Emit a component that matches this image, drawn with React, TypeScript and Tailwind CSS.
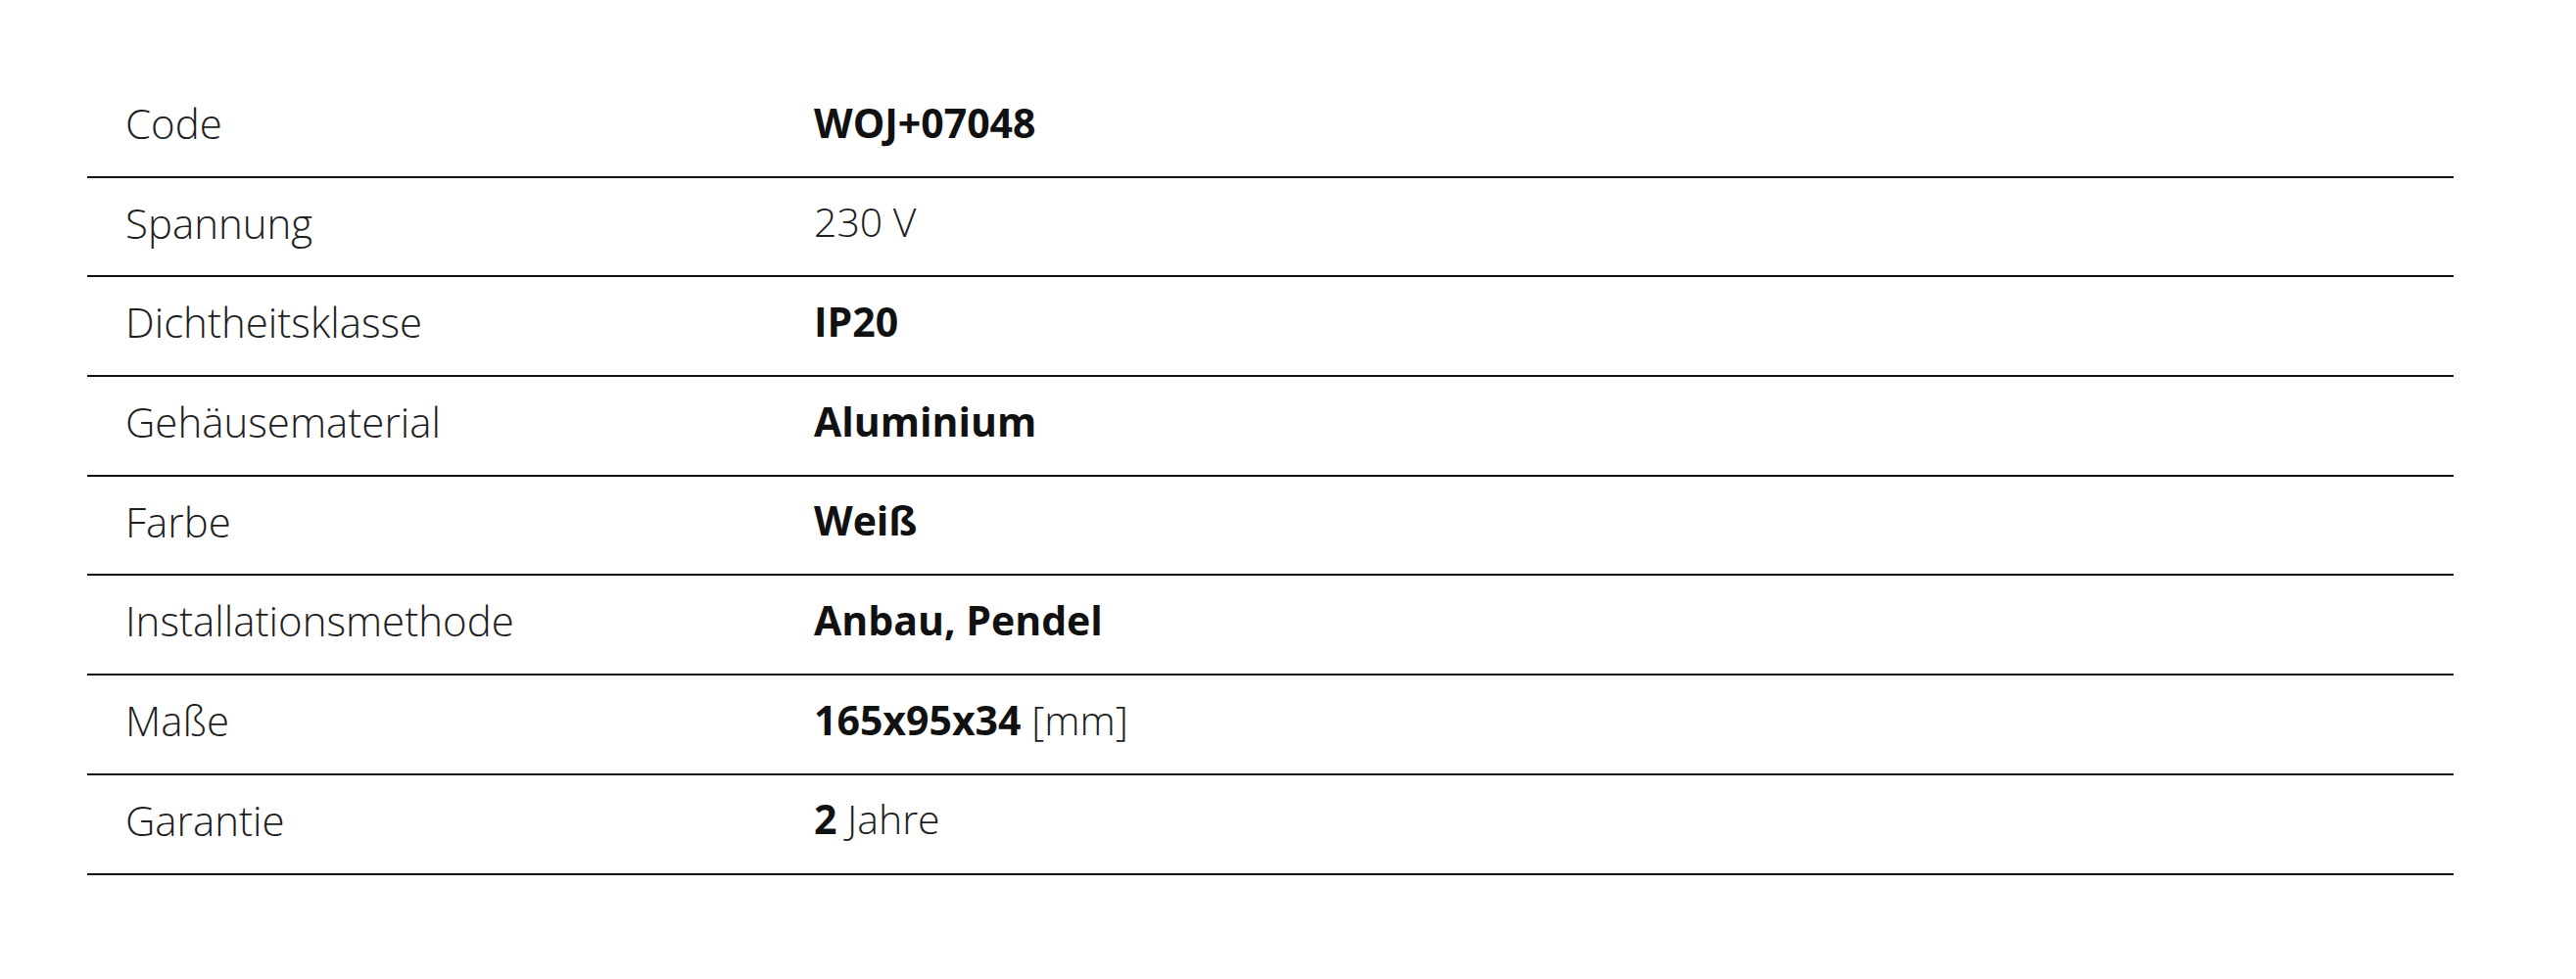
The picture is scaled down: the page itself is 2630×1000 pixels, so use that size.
import React from "react";

type Row = { label: string; value: React.ReactNode };

const rows: Row[] = [
  { label: "Code", value: <span className="font-bold text-[#111]">WOJ+07048</span> },
  { label: "Spannung", value: <span>230 V</span> },
  { label: "Dichtheitsklasse", value: <span className="font-bold text-[#111]">IP20</span> },
  { label: "Gehäusematerial", value: <span className="font-bold text-[#111]">Aluminium</span> },
  { label: "Farbe", value: <span className="font-bold text-[#111]">Weiß</span> },
  { label: "Installationsmethode", value: <span className="font-bold text-[#111]">Anbau, Pendel</span> },
  {
    label: "Maße",
    value: (
      <span>
        <span className="font-bold text-[#111]">165x95x34</span> [mm]
      </span>
    ),
  },
  {
    label: "Garantie",
    value: (
      <span>
        <span className="font-bold text-[#111]">2</span> Jahre
      </span>
    ),
  },
];

export default function App() {
  return (
    <div
      className="w-[2630px] h-[1000px] bg-white pt-[80px]"
      style={{ fontFamily: '"Open Sans", "Noto Sans", Arial, sans-serif' }}
    >
      <div className="ml-[89px] w-[2416px] flex flex-col">
        {rows.map((r) => (
          <div
            key={r.label}
            className="flex items-center h-[101.7px] border-b-2 border-[#111] pb-[9px] text-[41px] font-light text-[#1e1e1e]"
          >
            <div className="w-[742px] pl-[39px] shrink-0 whitespace-nowrap text-[42px]">{r.label}</div>
            <div className="flex-1 whitespace-nowrap">{r.value}</div>
          </div>
        ))}
      </div>
    </div>
  );
}
